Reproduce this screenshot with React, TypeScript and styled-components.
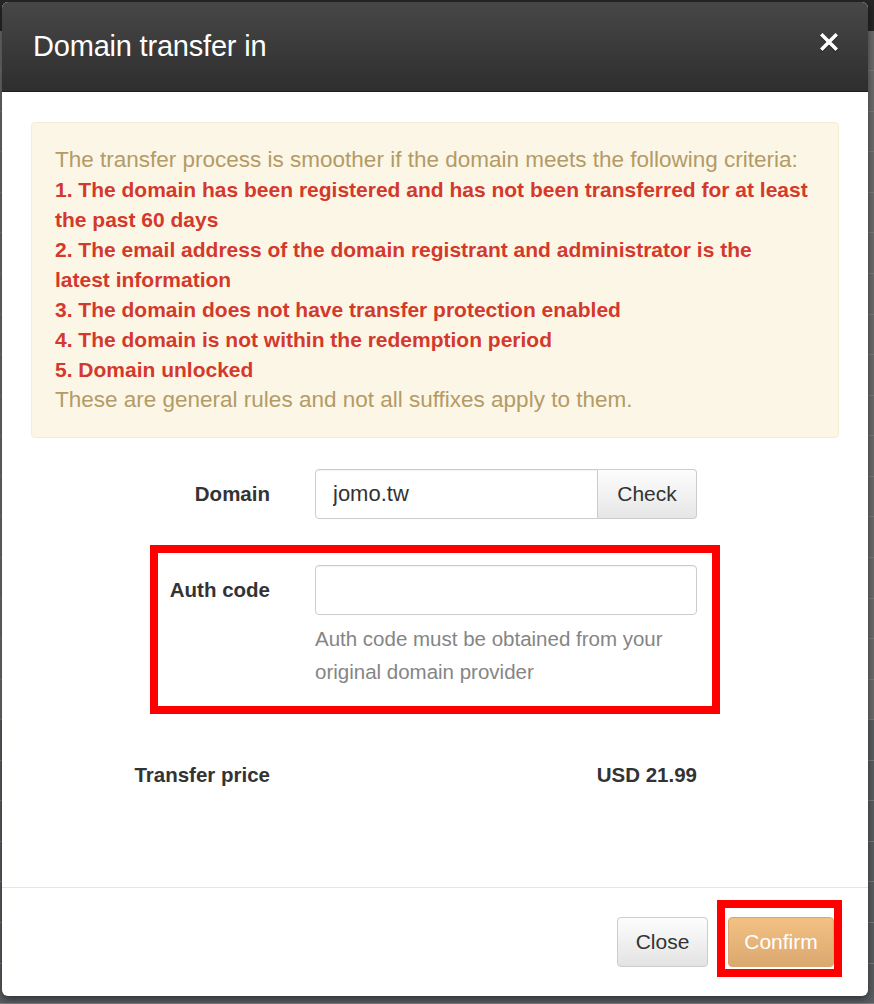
import styled, { createGlobalStyle } from 'styled-components';

const GlobalStyle = createGlobalStyle`
  html, body {
    margin: 0;
    padding: 0;
    background: #4f5357;
  }
  body {
    font-family: 'Liberation Sans', Arial, sans-serif;
  }
`;

const Screen = styled.div`
  position: relative;
  width: 874px;
  height: 1004px;
  overflow: hidden;
  background: #4f5357;
`;

const PageBehind = styled.div`
  display: flex;
  flex-direction: column;
  height: 100%;
`;

const PageTopBar = styled.div`
  height: 31px;
  background: #262626;
`;

const PageRow = styled.div<{ $dark?: boolean }>`
  height: 40px;
  border-bottom: 1px solid #7c7c7c;
  background: ${p => (p.$dark ? '#5a5e62' : '#6c6c6c')};
`;

const Modal = styled.div`
  position: absolute;
  top: 2px;
  left: 2px;
  width: 866px;
  height: 994px;
  display: flex;
  flex-direction: column;
  background: #fff;
  border-radius: 6px;
  overflow: hidden;
  box-shadow: 0 3px 9px rgba(0, 0, 0, 0.5);
`;

const Header = styled.div`
  display: flex;
  align-items: center;
  justify-content: space-between;
  height: 89px;
  padding: 0 31px;
  background: linear-gradient(#474747, #2e2e2e);
  border-bottom: 1px solid #1e1e1e;
`;

const Title = styled.h4`
  margin: 0;
  font-size: 29px;
  font-weight: 400;
  color: #fff;
  letter-spacing: -0.2px;
`;

const CloseX = styled.button`
  display: flex;
  padding: 0;
  margin-right: -1px;
  margin-top: -9px;
  border: 0;
  background: none;
  cursor: pointer;
  filter: drop-shadow(0 1px 0 rgba(0, 0, 0, 0.6));
`;

const Body = styled.div`
  flex: 1;
  padding: 30px 29px 0;
`;

const Alert = styled.div`
  padding: 22px 23px;
  border: 1px solid #f6ecd6;
  border-radius: 4px;
  background: #fcf6e6;
  font-size: 22.5px;
  line-height: 30px;
  color: #b39b66;
`;

const Rule = styled.div`
  font-size: 21px;
  font-weight: 700;
  color: #d3392c;
`;

const FormRow = styled.div<{ $gap: number }>`
  position: relative;
  display: grid;
  grid-template-columns: 239px 382px;
  column-gap: 45px;
  margin-top: ${p => p.$gap}px;
`;

const Label = styled.label`
  line-height: 50px;
  text-align: right;
  font-size: 20.5px;
  font-weight: 700;
  color: #333;
`;

const Field = styled.div`
  display: flex;
  flex-direction: column;
`;

const InputGroup = styled.div`
  display: flex;
  height: 50px;
`;

const TextInput = styled.input<{ $joined?: boolean }>`
  flex: ${p => (p.$joined ? '1 1 auto' : '0 0 50px')};
  min-width: 0;
  height: 50px;
  box-sizing: border-box;
  padding: 0 17px;
  border: 1px solid #ccc;
  border-radius: ${p => (p.$joined ? '4px 0 0 4px' : '4px')};
  font-family: inherit;
  font-size: 22px;
  color: #333;
  box-shadow: inset 0 1px 1px rgba(0, 0, 0, 0.05);
  outline: none;
`;

const AddonButton = styled.button`
  flex: 0 0 99px;
  border: 1px solid #ccc;
  border-left: 0;
  border-radius: 0 4px 4px 0;
  background: linear-gradient(#fdfdfd, #e6e6e6);
  font-family: inherit;
  font-size: 21px;
  color: #333;
`;

const Help = styled.div`
  margin-top: 7px;
  font-size: 20.5px;
  line-height: 33px;
  color: #858585;
`;

const Highlight = styled.div<{ $top: number; $left: number; $width: number; $bottom: number }>`
  position: absolute;
  top: ${p => p.$top}px;
  left: ${p => p.$left}px;
  width: ${p => p.$width}px;
  bottom: ${p => p.$bottom}px;
  box-sizing: border-box;
  border: 8px solid #ff0000;
  pointer-events: none;
`;

const PriceLabel = styled(Label)`
  line-height: 30px;
`;

const Price = styled.div`
  line-height: 30px;
  text-align: right;
  font-size: 20.5px;
  font-weight: 700;
  color: #333;
`;

const Footer = styled.div`
  display: flex;
  justify-content: flex-end;
  gap: 20px;
  padding: 29px 34px;
  border-top: 1px solid #e5e5e5;
`;

const Button = styled.button<{ $primary?: boolean }>`
  width: ${p => (p.$primary ? 106 : 91)}px;
  height: 50px;
  padding: 0;
  border: 1px solid ${p => (p.$primary ? '#d9a66b' : '#ccc')};
  border-radius: 4px;
  background: ${p =>
    p.$primary ? 'linear-gradient(#f3c182, #daa970)' : 'linear-gradient(#fdfdfd, #e3e3e3)'};
  font-family: inherit;
  font-size: 21px;
  color: ${p => (p.$primary ? '#fff' : '#333')};
`;

const ButtonFrame = styled.div`
  position: relative;
  display: flex;
`;

const App = () => {
  return (
    <Screen>
      <GlobalStyle />
      <PageBehind>
        <PageTopBar />
        {Array.from({ length: 24 }).map((_, i) => (
          <PageRow key={i} $dark={i > 16} />
        ))}
      </PageBehind>
      <Modal>
        <Header>
          <Title>Domain transfer in</Title>
          <CloseX aria-label="Close">
            <svg width="18" height="18" viewBox="0 0 18 18">
              <path d="M2.5 2.5 L15.5 15.5 M15.5 2.5 L2.5 15.5" stroke="#fff" strokeWidth="3.6" strokeLinecap="square" />
            </svg>
          </CloseX>
        </Header>
        <Body>
          <Alert>
            The transfer process is smoother if the domain meets the following criteria:
            <Rule>
              1. The domain has been registered and has not been transferred for at least
              <br />
              the past 60 days
            </Rule>
            <Rule>
              2. The email address of the domain registrant and administrator is the
              <br />
              latest information
            </Rule>
            <Rule>3. The domain does not have transfer protection enabled</Rule>
            <Rule>4. The domain is not within the redemption period</Rule>
            <Rule>5. Domain unlocked</Rule>
            These are general rules and not all suffixes apply to them.
          </Alert>

          <FormRow $gap={31}>
            <Label>Domain</Label>
            <InputGroup>
              <TextInput $joined defaultValue="jomo.tw" />
              <AddonButton>Check</AddonButton>
            </InputGroup>
          </FormRow>

          <FormRow $gap={46}>
            <Highlight $top={-20} $left={119} $width={570} $bottom={-26} />
            <Label>Auth code</Label>
            <Field>
              <TextInput />
              <Help>Auth code must be obtained from your original domain provider</Help>
            </Field>
          </FormRow>

          <FormRow $gap={72}>
            <PriceLabel>Transfer price</PriceLabel>
            <Price>USD 21.99</Price>
          </FormRow>
        </Body>
        <Footer>
          <Button>Close</Button>
          <ButtonFrame>
            <Button $primary>Confirm</Button>
            <Highlight $top={-17} $left={-11} $width={125} $bottom={-10} />
          </ButtonFrame>
        </Footer>
      </Modal>
    </Screen>
  );
};

export default App;
